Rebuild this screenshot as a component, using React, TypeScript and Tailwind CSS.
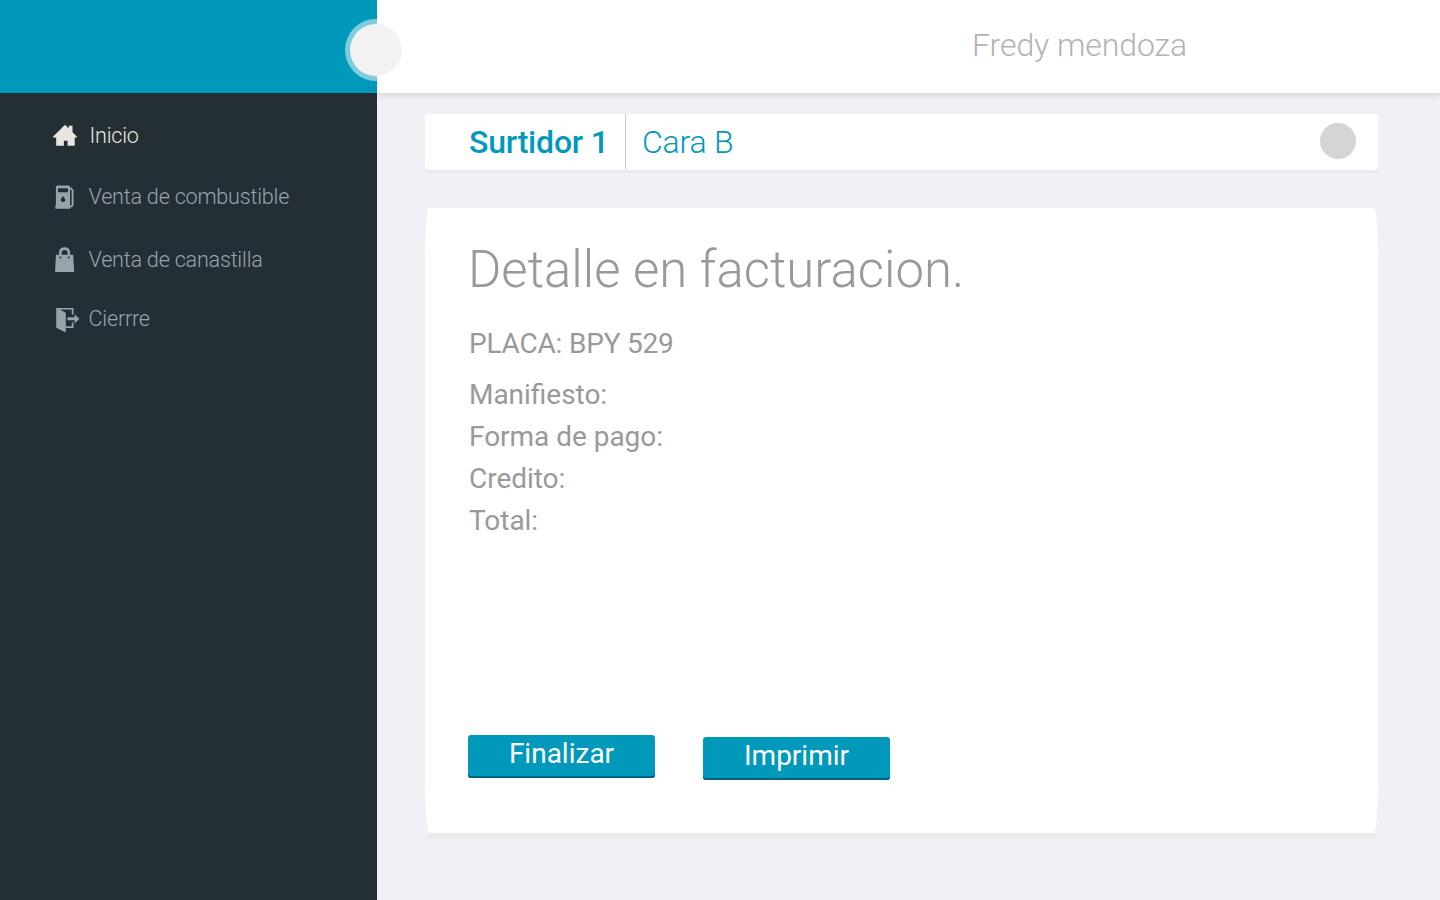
const rows = ["Manifiesto:", "Forma de pago:", "Credito:", "Total:"];

function HomeIcon() {
  return (
    <svg viewBox="0 0 30 30" className="size-[30px]" fill="#e8e6e1">
      <path d="M15 3.8L18.7 7.4V4.8H22.5V11.2L27 15.7V16.5H24.7V24.7H17.6V19.8H13.9V24.7H6.2V16.5H3V15.7Z" />
    </svg>
  );
}

function PumpIcon() {
  return (
    <svg viewBox="0 0 30 30" className="size-[30px]" fill="#96a4ad">
      <path fillRule="evenodd" d="M7.5 3.6H18.5Q20 3.6 20 5.2V23.5H20.3V26.8H5.3V23.5H5.9V5.2Q5.9 3.6 7.5 3.6ZM8 6.2V10.2H18V6.2ZM13 14Q10.6 16.8 10.6 18.1Q10.8 20 13 20Q15.2 20 15.4 18.1Q15.4 16.8 13 14Z" />
      <path d="M20 5.6L22.6 8.2V22.5Q22.6 24.6 20 24.6" fill="none" stroke="#96a4ad" strokeWidth="1.9" />
    </svg>
  );
}

function BagIcon() {
  return (
    <svg viewBox="0 0 30 30" className="size-[30px]" fill="#96a4ad">
      <path d="M6 9.8H23.2L24.2 27H5Z" />
      <path d="M10.3 12V8Q10.3 3.6 14.6 3.6Q18.9 3.6 18.9 8V12" fill="none" stroke="#96a4ad" strokeWidth="2.6" />
      <circle cx="10.4" cy="12.6" r="1" fill="#242e35" />
      <circle cx="18.8" cy="12.6" r="1" fill="#242e35" />
    </svg>
  );
}

function ExitIcon() {
  return (
    <svg viewBox="0 0 30 30" className="size-[30px]" fill="#96a4ad">
      <path d="M6.2 4H23.5V10.4H21.8V5.6H10L15.8 8.8V28.4L6.2 23.8Z" />
      <path d="M15.8 22.2H21.8V18.4H23.5V23.9H15.8Z" />
      <path d="M17.4 13.2H24.6V10.2L29.4 14.8L24.6 19.4V16.3H17.4Z" />
    </svg>
  );
}

export default function App() {
  return (
    <div className="flex h-[900px] w-[1440px] overflow-hidden bg-[#f0f1f7] font-['Roboto',sans-serif]">
      <aside className="w-[377px] shrink-0 bg-[#242e35]">
        <div className="relative h-[93px] bg-[#0099bb]">
          <div className="absolute left-[345px] top-[19px] z-10 size-[62px]">
            <svg viewBox="0 0 62 62" className="size-full">
              <path d="M32 0H31A31 31 0 0 0 31 62H32Z" fill="#80ccdd" />
              <circle cx="31" cy="31" r="26" fill="#f2f2f2" />
            </svg>
          </div>
        </div>
        <nav className="flex flex-col pl-[50px] text-[21.6px] leading-[30px] font-light tracking-[-0.22px] text-[#96a4ad]">
          <a className="mt-[28px] flex h-[30px] gap-[9.5px] text-[#e8e6e1]"><HomeIcon />Inicio</a>
          <a className="mt-[31px] flex h-[30px] gap-[8.5px]"><PumpIcon />Venta de combustible</a>
          <a className="mt-[33px] flex h-[30px] gap-[8.5px]"><BagIcon />Venta de canastilla</a>
          <a className="mt-[29px] flex h-[30px] gap-[8.5px]"><ExitIcon />Cierrre</a>
        </nav>
      </aside>
      <div className="flex-1">
        <header className="h-[93px] bg-white pt-[26px] pl-[595px] text-[32px] leading-[38px] font-light tracking-[-0.08px] text-[#b3b3b3] shadow-[0_3px_6px_rgba(0,0,0,0.1)]">Fredy mendoza</header>
        <main className="pt-[21px] pl-[48px]">
          <section className="flex h-[56px] w-[953px] items-center rounded-[4px] bg-white pr-[22px] pl-[44px] text-[32px] leading-[56px] text-[#0099bb] shadow-[0_3px_0_#e8e9ed]">
            <span className="w-[157px] border-r border-[#ccc] font-medium tracking-[-0.2px]">Surtidor 1</span>
            <span className="pl-[16px] font-light tracking-[-0.2px]">Cara B</span>
            <span className="mt-[-2px] ml-auto size-[36px] rounded-full bg-[#d5d5d5]" />
          </section>
          <section className="mt-[38px] h-[625px] w-[953px] rounded-[4px/50px] bg-white pl-[44px] text-[#999] shadow-[0_6px_0_#eaebef]">
            <h1 className="-ml-px pt-[32px] text-[50.9px] leading-[60px] font-light">Detalle en facturacion.</h1>
            <p className="pt-[27px] text-[28px] leading-[34px] tracking-[-0.2px]">PLACA: BPY 529</p>
            <div className="pt-[13px] text-[28px] leading-[42px] tracking-[-0.03px]">{rows.map((r) => <p key={r}>{r.replace("fi", "\uFB01")}</p>)}</div>
            <div className="ml-[-1px] flex gap-[48px] pt-[193px] text-[28px] leading-[38px] text-white">
              <button className="flex h-[43px] w-[187px] justify-center rounded-[3px] bg-[#0099bb] shadow-[inset_0_-2px_0_#006180]">Finalizar</button>
              <button className="mt-[2px] flex h-[43px] w-[187px] justify-center rounded-[3px] bg-[#0099bb] shadow-[inset_0_-2px_0_#006180]">Imprimir</button>
            </div>
          </section>
        </main>
      </div>
    </div>
  );
}
